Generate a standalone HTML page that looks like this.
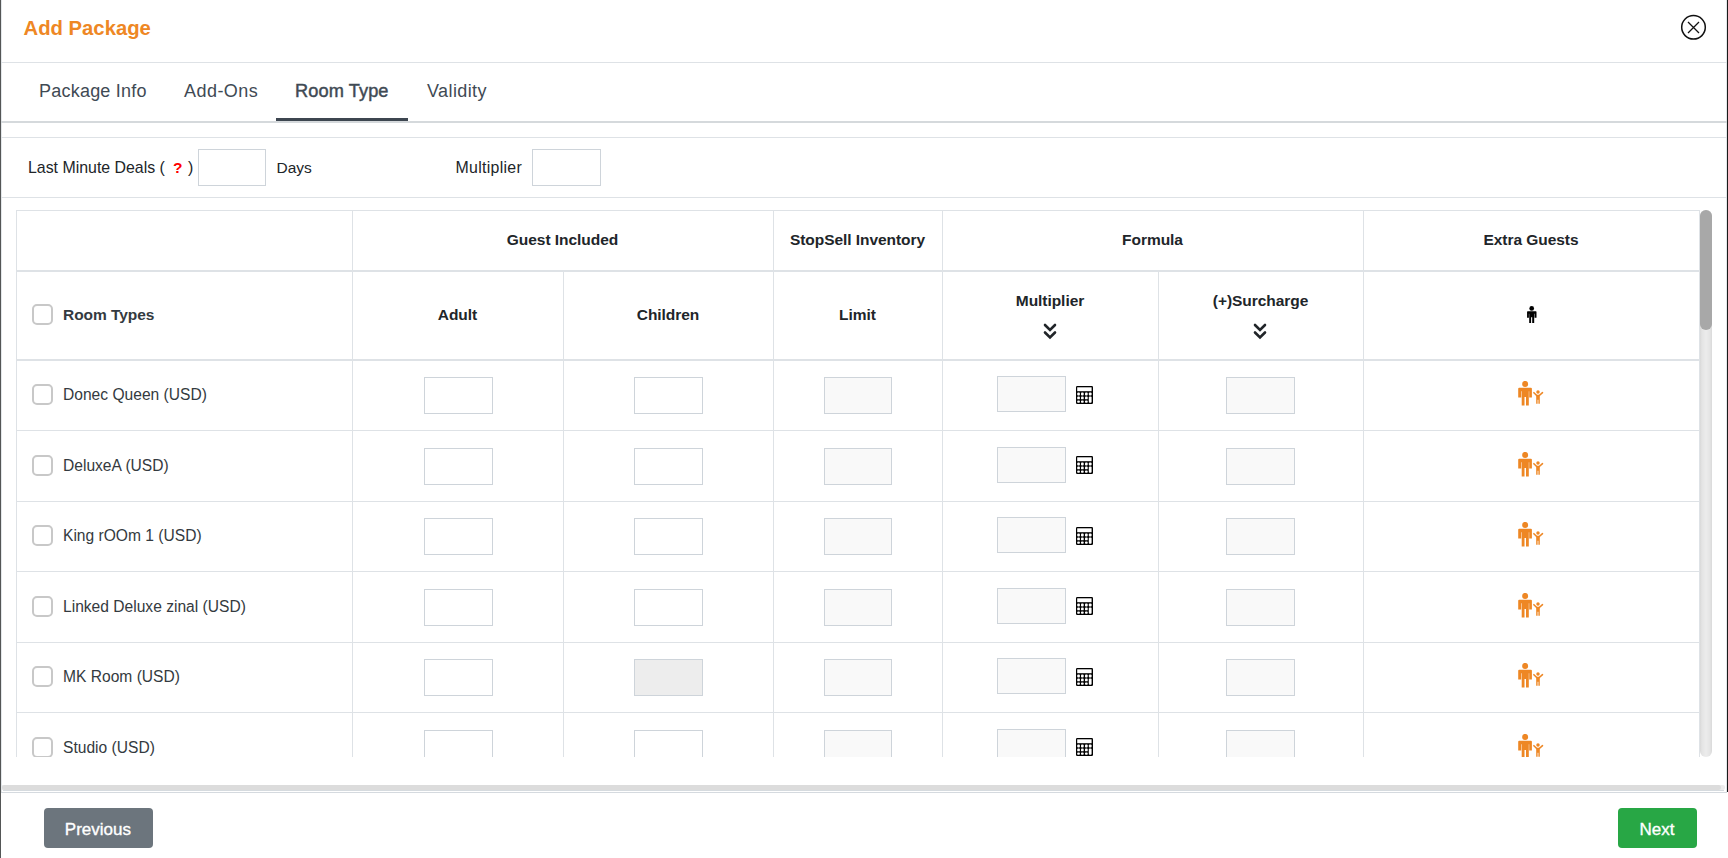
<!DOCTYPE html>
<html><head><meta charset="utf-8">
<style>
*{box-sizing:border-box;margin:0;padding:0}
html,body{width:1728px;height:858px;overflow:hidden;background:#fff;font-family:"Liberation Sans",sans-serif;color:#212529;position:relative}
.a{position:absolute}
.hl{position:absolute;height:1px;background:#dee2e6}
.vl{position:absolute;width:1px;background:#dee2e6}
.t{position:absolute;white-space:nowrap;line-height:1}
.inp{position:absolute;border:1px solid #ced4da;background:#fff}
.dis{background:#f9f9f9}
.dis2{background:#ededed}
.th{font-weight:bold;font-size:15.5px;letter-spacing:-0.05px;color:#212529}
.cb{position:absolute;width:21px;height:21px;border:2px solid #c8c8c8;border-radius:5px;background:#fff}
.nm{font-size:15.6px;letter-spacing:0px;color:#343a40}
</style></head><body>
<div class="a" style="left:0;top:0;width:1px;height:858px;background:#545656"></div>
<div class="a" style="left:1px;top:0;width:1px;height:793px;background:#e3e7ea"></div>
<div class="a" style="left:1726px;top:0;width:1px;height:792px;background:#e3e7ea"></div>
<div class="a" style="left:1727px;top:0;width:1px;height:792px;background:#1a1a1a"></div>
<div class="t" style="left:23.5px;top:18.2px;font-size:20.3px;font-weight:bold;color:#ee8724">Add Package</div>
<svg class="a" style="left:1680px;top:14px" width="27" height="27" viewBox="0 0 27 27">
<circle cx="13.5" cy="13.3" r="11.8" fill="none" stroke="#111" stroke-width="1.5"/>
<path d="M8 8 L19 19 M19 8 L8 19" stroke="#111" stroke-width="1.3"/></svg>
<div class="hl" style="left:1px;top:62px;width:1726px"></div>
<div class="t" style="left:39px;top:82px;font-size:18px;letter-spacing:0.22px;color:#3f4a54">Package Info</div>
<div class="t" style="left:184px;top:82px;font-size:18px;letter-spacing:0.45px;color:#3f4a54">Add-Ons</div>
<div class="t" style="left:295px;top:82px;font-size:18.2px;-webkit-text-stroke:0.45px #3f4a54;color:#3f4a54;letter-spacing:0.1px">Room Type</div>
<div class="t" style="left:427px;top:82px;font-size:18px;letter-spacing:0.4px;color:#3f4a54">Validity</div>
<div class="a" style="left:276px;top:118px;width:132px;height:3px;background:#3d4650"></div>
<div class="a" style="left:1px;top:121px;width:1726px;height:2px;background:#d5d9dc"></div>
<div class="hl" style="left:1px;top:137px;width:1726px"></div>
<div class="t" style="left:28px;top:160px;font-size:15.9px">Last Minute Deals (</div>
<div class="t" style="left:173px;top:160px;font-size:15.5px;font-weight:bold;color:#f00">?</div>
<div class="t" style="left:188px;top:160px;font-size:15.9px">)</div>
<div class="inp" style="left:198px;top:149px;width:68px;height:37px"></div>
<div class="t" style="left:276.5px;top:159.5px;font-size:15.5px">Days</div>
<div class="t" style="left:455.5px;top:160px;font-size:15.9px;letter-spacing:0.3px">Multiplier</div>
<div class="inp" style="left:532px;top:149px;width:69px;height:37px"></div>
<div class="hl" style="left:1px;top:197px;width:1726px"></div>
<div class="a" style="left:0;top:198px;width:1728px;height:559px;overflow:hidden">
<div class="hl" style="left:16px;top:12px;width:1684px"></div>
<div class="vl" style="left:16px;top:12px;height:600px"></div>
<div class="vl" style="left:1699px;top:12px;height:600px"></div>
<div class="a" style="left:16px;top:72px;width:1684px;height:2px;background:#dee2e6"></div>
<div class="a" style="left:16px;top:161px;width:1684px;height:2px;background:#dee2e6"></div>
<div class="vl" style="left:352px;top:12px;height:600px"></div>
<div class="vl" style="left:773px;top:12px;height:600px"></div>
<div class="vl" style="left:942px;top:12px;height:600px"></div>
<div class="vl" style="left:1363px;top:12px;height:600px"></div>
<div class="vl" style="left:563px;top:74px;height:600px"></div>
<div class="vl" style="left:1158px;top:74px;height:600px"></div>
<div class="hl" style="left:16px;top:232px;width:1684px"></div>
<div class="hl" style="left:16px;top:303px;width:1684px"></div>
<div class="hl" style="left:16px;top:373px;width:1684px"></div>
<div class="hl" style="left:16px;top:444px;width:1684px"></div>
<div class="hl" style="left:16px;top:514px;width:1684px"></div>
<div class="t th" style="left:362.5px;width:400px;text-align:center;top:33.5px;">Guest Included</div>
<div class="t th" style="left:657.5px;width:400px;text-align:center;top:33.5px;">StopSell Inventory</div>
<div class="t th" style="left:952.5px;width:400px;text-align:center;top:33.5px;">Formula</div>
<div class="t th" style="left:1331.0px;width:400px;text-align:center;top:33.5px;">Extra Guests</div>
<div class="t th" style="left:257.5px;width:400px;text-align:center;top:109px;">Adult</div>
<div class="t th" style="left:468.0px;width:400px;text-align:center;top:109px;">Children</div>
<div class="t th" style="left:657.5px;width:400px;text-align:center;top:109px;">Limit</div>
<div class="t th" style="left:850.0px;width:400px;text-align:center;top:95px;">Multiplier</div>
<div class="t th" style="left:1060.5px;width:400px;text-align:center;top:95px;">(+)Surcharge</div>
<div class="cb" style="left:32px;top:106px"></div>
<div class="t th" style="left:63px;top:109px;color:#343a40">Room Types</div>
<svg class="a" style="left:1043.4px;top:124.5px" width="14" height="17" viewBox="0 0 14 17"><path d="M2 2 L7 7 L12 2 M2 9.5 L7 14.5 L12 9.5" fill="none" stroke="#212529" stroke-width="2.6" stroke-linecap="round" stroke-linejoin="miter"/></svg>
<svg class="a" style="left:1253.4px;top:124.5px" width="14" height="17" viewBox="0 0 14 17"><path d="M2 2 L7 7 L12 2 M2 9.5 L7 14.5 L12 9.5" fill="none" stroke="#212529" stroke-width="2.6" stroke-linecap="round" stroke-linejoin="miter"/></svg>
<svg class="a" style="left:1526px;top:107.69999999999999px" width="12" height="18" viewBox="0 0 12 18"><circle cx="5.7" cy="2.4" r="2.35" fill="#000"/><path d="M1.7 5.3 H9.9 Q10.5 5.3 10.5 5.9 V11.8 H8.6 V7.8 H8.2 V17.1 H6.2 V11.2 H5.1 V17.1 H3.2 V7.8 H2.9 V11.8 H1.06 V5.9 Q1.06 5.3 1.7 5.3 Z" fill="#000"/></svg>
<div class="cb" style="left:32px;top:186.3px"></div>
<div class="t nm" style="left:63px;top:189.2px">Donec Queen (USD)</div>
<div class="inp" style="left:424px;top:179.0px;width:69px;height:37px"></div>
<div class="inp " style="left:634px;top:179.0px;width:69px;height:37px"></div>
<div class="inp dis" style="left:824px;top:179.0px;width:68px;height:37px"></div>
<div class="inp dis" style="left:997px;top:178.0px;width:69px;height:36px"></div>
<svg class="a" style="left:1076px;top:187.60000000000002px" width="17" height="18" viewBox="0 0 17 18"><rect x="0" y="0" width="17" height="18" rx="1.2" fill="#000"/>
<g fill="#fff"><rect x="1.2" y="1.3" width="14.4" height="3.9"/>
<rect x="1.2" y="6.5" width="2.7" height="3" rx="0.9"/><rect x="5.0" y="6.5" width="2.7" height="3" rx="0.9"/><rect x="9.0" y="6.5" width="2.7" height="3" rx="0.9"/><rect x="12.8" y="6.5" width="2.8" height="3" rx="0.9"/>
<rect x="1.2" y="10.5" width="2.7" height="2.8" rx="0.9"/><rect x="5.0" y="10.5" width="2.7" height="2.8" rx="0.9"/><rect x="9.0" y="10.5" width="2.7" height="2.8" rx="0.9"/>
<rect x="1.2" y="14.4" width="2.7" height="2.3" rx="0.8"/><rect x="5.0" y="14.4" width="2.7" height="2.3" rx="0.8"/><rect x="9.0" y="14.4" width="2.7" height="2.3" rx="0.8"/>
<rect x="12.8" y="10.5" width="2.8" height="6.2" rx="0.9"/></g></svg>
<div class="inp dis" style="left:1226px;top:179.0px;width:69px;height:37px"></div>
<svg class="a" style="left:1517px;top:183.0px" width="27" height="25" viewBox="0 0 27 25"><g fill="#ee8724">
<circle cx="8.15" cy="2.9" r="3"/><path d="M2.2 6.8 H13.9 Q14.9 6.8 14.9 7.8 V16.4 H12.2 V10.2 H11.8 V24.5 H9.0 V16 H7.5 V24.5 H4.7 V10.2 H4.2 V16.4 H1.2 V7.8 Q1.2 6.8 2.2 6.8 Z"/>
<circle cx="21" cy="11.1" r="1.75"/><path d="M19.2 13.8 H22.8 V22.7 H21.4 V18.7 H20.6 V22.7 H19.2 Z"/></g>
<path d="M16.9 11.7 L19.7 14.5 M25.5 11.7 L22.3 14.5" stroke="#ee8724" stroke-width="1.6" stroke-linecap="round"/></svg>
<div class="cb" style="left:32px;top:256.8px"></div>
<div class="t nm" style="left:63px;top:259.7px">DeluxeA (USD)</div>
<div class="inp" style="left:424px;top:249.5px;width:69px;height:37px"></div>
<div class="inp " style="left:634px;top:249.5px;width:69px;height:37px"></div>
<div class="inp dis" style="left:824px;top:249.5px;width:68px;height:37px"></div>
<div class="inp dis" style="left:997px;top:248.5px;width:69px;height:36px"></div>
<svg class="a" style="left:1076px;top:258.1px" width="17" height="18" viewBox="0 0 17 18"><rect x="0" y="0" width="17" height="18" rx="1.2" fill="#000"/>
<g fill="#fff"><rect x="1.2" y="1.3" width="14.4" height="3.9"/>
<rect x="1.2" y="6.5" width="2.7" height="3" rx="0.9"/><rect x="5.0" y="6.5" width="2.7" height="3" rx="0.9"/><rect x="9.0" y="6.5" width="2.7" height="3" rx="0.9"/><rect x="12.8" y="6.5" width="2.8" height="3" rx="0.9"/>
<rect x="1.2" y="10.5" width="2.7" height="2.8" rx="0.9"/><rect x="5.0" y="10.5" width="2.7" height="2.8" rx="0.9"/><rect x="9.0" y="10.5" width="2.7" height="2.8" rx="0.9"/>
<rect x="1.2" y="14.4" width="2.7" height="2.3" rx="0.8"/><rect x="5.0" y="14.4" width="2.7" height="2.3" rx="0.8"/><rect x="9.0" y="14.4" width="2.7" height="2.3" rx="0.8"/>
<rect x="12.8" y="10.5" width="2.8" height="6.2" rx="0.9"/></g></svg>
<div class="inp dis" style="left:1226px;top:249.5px;width:69px;height:37px"></div>
<svg class="a" style="left:1517px;top:253.5px" width="27" height="25" viewBox="0 0 27 25"><g fill="#ee8724">
<circle cx="8.15" cy="2.9" r="3"/><path d="M2.2 6.8 H13.9 Q14.9 6.8 14.9 7.8 V16.4 H12.2 V10.2 H11.8 V24.5 H9.0 V16 H7.5 V24.5 H4.7 V10.2 H4.2 V16.4 H1.2 V7.8 Q1.2 6.8 2.2 6.8 Z"/>
<circle cx="21" cy="11.1" r="1.75"/><path d="M19.2 13.8 H22.8 V22.7 H21.4 V18.7 H20.6 V22.7 H19.2 Z"/></g>
<path d="M16.9 11.7 L19.7 14.5 M25.5 11.7 L22.3 14.5" stroke="#ee8724" stroke-width="1.6" stroke-linecap="round"/></svg>
<div class="cb" style="left:32px;top:327.29999999999995px"></div>
<div class="t nm" style="left:63px;top:330.20000000000005px">King rOOm 1 (USD)</div>
<div class="inp" style="left:424px;top:320.0px;width:69px;height:37px"></div>
<div class="inp " style="left:634px;top:320.0px;width:69px;height:37px"></div>
<div class="inp dis" style="left:824px;top:320.0px;width:68px;height:37px"></div>
<div class="inp dis" style="left:997px;top:319.0px;width:69px;height:36px"></div>
<svg class="a" style="left:1076px;top:328.6px" width="17" height="18" viewBox="0 0 17 18"><rect x="0" y="0" width="17" height="18" rx="1.2" fill="#000"/>
<g fill="#fff"><rect x="1.2" y="1.3" width="14.4" height="3.9"/>
<rect x="1.2" y="6.5" width="2.7" height="3" rx="0.9"/><rect x="5.0" y="6.5" width="2.7" height="3" rx="0.9"/><rect x="9.0" y="6.5" width="2.7" height="3" rx="0.9"/><rect x="12.8" y="6.5" width="2.8" height="3" rx="0.9"/>
<rect x="1.2" y="10.5" width="2.7" height="2.8" rx="0.9"/><rect x="5.0" y="10.5" width="2.7" height="2.8" rx="0.9"/><rect x="9.0" y="10.5" width="2.7" height="2.8" rx="0.9"/>
<rect x="1.2" y="14.4" width="2.7" height="2.3" rx="0.8"/><rect x="5.0" y="14.4" width="2.7" height="2.3" rx="0.8"/><rect x="9.0" y="14.4" width="2.7" height="2.3" rx="0.8"/>
<rect x="12.8" y="10.5" width="2.8" height="6.2" rx="0.9"/></g></svg>
<div class="inp dis" style="left:1226px;top:320.0px;width:69px;height:37px"></div>
<svg class="a" style="left:1517px;top:324.0px" width="27" height="25" viewBox="0 0 27 25"><g fill="#ee8724">
<circle cx="8.15" cy="2.9" r="3"/><path d="M2.2 6.8 H13.9 Q14.9 6.8 14.9 7.8 V16.4 H12.2 V10.2 H11.8 V24.5 H9.0 V16 H7.5 V24.5 H4.7 V10.2 H4.2 V16.4 H1.2 V7.8 Q1.2 6.8 2.2 6.8 Z"/>
<circle cx="21" cy="11.1" r="1.75"/><path d="M19.2 13.8 H22.8 V22.7 H21.4 V18.7 H20.6 V22.7 H19.2 Z"/></g>
<path d="M16.9 11.7 L19.7 14.5 M25.5 11.7 L22.3 14.5" stroke="#ee8724" stroke-width="1.6" stroke-linecap="round"/></svg>
<div class="cb" style="left:32px;top:397.79999999999995px"></div>
<div class="t nm" style="left:63px;top:400.70000000000005px">Linked Deluxe zinal (USD)</div>
<div class="inp" style="left:424px;top:390.5px;width:69px;height:37px"></div>
<div class="inp " style="left:634px;top:390.5px;width:69px;height:37px"></div>
<div class="inp dis" style="left:824px;top:390.5px;width:68px;height:37px"></div>
<div class="inp dis" style="left:997px;top:389.5px;width:69px;height:36px"></div>
<svg class="a" style="left:1076px;top:399.1px" width="17" height="18" viewBox="0 0 17 18"><rect x="0" y="0" width="17" height="18" rx="1.2" fill="#000"/>
<g fill="#fff"><rect x="1.2" y="1.3" width="14.4" height="3.9"/>
<rect x="1.2" y="6.5" width="2.7" height="3" rx="0.9"/><rect x="5.0" y="6.5" width="2.7" height="3" rx="0.9"/><rect x="9.0" y="6.5" width="2.7" height="3" rx="0.9"/><rect x="12.8" y="6.5" width="2.8" height="3" rx="0.9"/>
<rect x="1.2" y="10.5" width="2.7" height="2.8" rx="0.9"/><rect x="5.0" y="10.5" width="2.7" height="2.8" rx="0.9"/><rect x="9.0" y="10.5" width="2.7" height="2.8" rx="0.9"/>
<rect x="1.2" y="14.4" width="2.7" height="2.3" rx="0.8"/><rect x="5.0" y="14.4" width="2.7" height="2.3" rx="0.8"/><rect x="9.0" y="14.4" width="2.7" height="2.3" rx="0.8"/>
<rect x="12.8" y="10.5" width="2.8" height="6.2" rx="0.9"/></g></svg>
<div class="inp dis" style="left:1226px;top:390.5px;width:69px;height:37px"></div>
<svg class="a" style="left:1517px;top:394.5px" width="27" height="25" viewBox="0 0 27 25"><g fill="#ee8724">
<circle cx="8.15" cy="2.9" r="3"/><path d="M2.2 6.8 H13.9 Q14.9 6.8 14.9 7.8 V16.4 H12.2 V10.2 H11.8 V24.5 H9.0 V16 H7.5 V24.5 H4.7 V10.2 H4.2 V16.4 H1.2 V7.8 Q1.2 6.8 2.2 6.8 Z"/>
<circle cx="21" cy="11.1" r="1.75"/><path d="M19.2 13.8 H22.8 V22.7 H21.4 V18.7 H20.6 V22.7 H19.2 Z"/></g>
<path d="M16.9 11.7 L19.7 14.5 M25.5 11.7 L22.3 14.5" stroke="#ee8724" stroke-width="1.6" stroke-linecap="round"/></svg>
<div class="cb" style="left:32px;top:468.29999999999995px"></div>
<div class="t nm" style="left:63px;top:471.20000000000005px">MK Room (USD)</div>
<div class="inp" style="left:424px;top:461.0px;width:69px;height:37px"></div>
<div class="inp dis2" style="left:634px;top:461.0px;width:69px;height:37px"></div>
<div class="inp dis" style="left:824px;top:461.0px;width:68px;height:37px"></div>
<div class="inp dis" style="left:997px;top:460.0px;width:69px;height:36px"></div>
<svg class="a" style="left:1076px;top:469.6px" width="17" height="18" viewBox="0 0 17 18"><rect x="0" y="0" width="17" height="18" rx="1.2" fill="#000"/>
<g fill="#fff"><rect x="1.2" y="1.3" width="14.4" height="3.9"/>
<rect x="1.2" y="6.5" width="2.7" height="3" rx="0.9"/><rect x="5.0" y="6.5" width="2.7" height="3" rx="0.9"/><rect x="9.0" y="6.5" width="2.7" height="3" rx="0.9"/><rect x="12.8" y="6.5" width="2.8" height="3" rx="0.9"/>
<rect x="1.2" y="10.5" width="2.7" height="2.8" rx="0.9"/><rect x="5.0" y="10.5" width="2.7" height="2.8" rx="0.9"/><rect x="9.0" y="10.5" width="2.7" height="2.8" rx="0.9"/>
<rect x="1.2" y="14.4" width="2.7" height="2.3" rx="0.8"/><rect x="5.0" y="14.4" width="2.7" height="2.3" rx="0.8"/><rect x="9.0" y="14.4" width="2.7" height="2.3" rx="0.8"/>
<rect x="12.8" y="10.5" width="2.8" height="6.2" rx="0.9"/></g></svg>
<div class="inp dis" style="left:1226px;top:461.0px;width:69px;height:37px"></div>
<svg class="a" style="left:1517px;top:465.0px" width="27" height="25" viewBox="0 0 27 25"><g fill="#ee8724">
<circle cx="8.15" cy="2.9" r="3"/><path d="M2.2 6.8 H13.9 Q14.9 6.8 14.9 7.8 V16.4 H12.2 V10.2 H11.8 V24.5 H9.0 V16 H7.5 V24.5 H4.7 V10.2 H4.2 V16.4 H1.2 V7.8 Q1.2 6.8 2.2 6.8 Z"/>
<circle cx="21" cy="11.1" r="1.75"/><path d="M19.2 13.8 H22.8 V22.7 H21.4 V18.7 H20.6 V22.7 H19.2 Z"/></g>
<path d="M16.9 11.7 L19.7 14.5 M25.5 11.7 L22.3 14.5" stroke="#ee8724" stroke-width="1.6" stroke-linecap="round"/></svg>
<div class="cb" style="left:32px;top:538.8px"></div>
<div class="t nm" style="left:63px;top:541.7px">Studio (USD)</div>
<div class="inp" style="left:424px;top:531.5px;width:69px;height:37px"></div>
<div class="inp " style="left:634px;top:531.5px;width:69px;height:37px"></div>
<div class="inp dis" style="left:824px;top:531.5px;width:68px;height:37px"></div>
<div class="inp dis" style="left:997px;top:530.5px;width:69px;height:36px"></div>
<svg class="a" style="left:1076px;top:540.1px" width="17" height="18" viewBox="0 0 17 18"><rect x="0" y="0" width="17" height="18" rx="1.2" fill="#000"/>
<g fill="#fff"><rect x="1.2" y="1.3" width="14.4" height="3.9"/>
<rect x="1.2" y="6.5" width="2.7" height="3" rx="0.9"/><rect x="5.0" y="6.5" width="2.7" height="3" rx="0.9"/><rect x="9.0" y="6.5" width="2.7" height="3" rx="0.9"/><rect x="12.8" y="6.5" width="2.8" height="3" rx="0.9"/>
<rect x="1.2" y="10.5" width="2.7" height="2.8" rx="0.9"/><rect x="5.0" y="10.5" width="2.7" height="2.8" rx="0.9"/><rect x="9.0" y="10.5" width="2.7" height="2.8" rx="0.9"/>
<rect x="1.2" y="14.4" width="2.7" height="2.3" rx="0.8"/><rect x="5.0" y="14.4" width="2.7" height="2.3" rx="0.8"/><rect x="9.0" y="14.4" width="2.7" height="2.3" rx="0.8"/>
<rect x="12.8" y="10.5" width="2.8" height="6.2" rx="0.9"/></g></svg>
<div class="inp dis" style="left:1226px;top:531.5px;width:69px;height:37px"></div>
<svg class="a" style="left:1517px;top:535.5px" width="27" height="25" viewBox="0 0 27 25"><g fill="#ee8724">
<circle cx="8.15" cy="2.9" r="3"/><path d="M2.2 6.8 H13.9 Q14.9 6.8 14.9 7.8 V16.4 H12.2 V10.2 H11.8 V24.5 H9.0 V16 H7.5 V24.5 H4.7 V10.2 H4.2 V16.4 H1.2 V7.8 Q1.2 6.8 2.2 6.8 Z"/>
<circle cx="21" cy="11.1" r="1.75"/><path d="M19.2 13.8 H22.8 V22.7 H21.4 V18.7 H20.6 V22.7 H19.2 Z"/></g>
<path d="M16.9 11.7 L19.7 14.5 M25.5 11.7 L22.3 14.5" stroke="#ee8724" stroke-width="1.6" stroke-linecap="round"/></svg>
<div class="a" style="left:1700px;top:12px;width:12px;height:547px;background:linear-gradient(to right,#d9d9d9 0,#e4e4e4 2px,#ececec 50%,#e4e4e4 10px,#d9d9d9 12px);border-radius:6px"></div>
<div class="a" style="left:1700px;top:12px;width:12px;height:120px;background:#a8a8a8;border-radius:6px"></div>
</div>
<div class="a" style="left:2px;top:785px;width:1723px;height:5px;background:#ececec;border-radius:0 2px 2px 0"></div>
<div class="a" style="left:2px;top:785px;width:1719px;height:5px;background:#dcdcdc;border-radius:2.5px"></div>
<div class="hl" style="left:3px;top:790px;width:1721px;background:#d6dbdf"></div>
<div class="hl" style="left:1px;top:792px;width:1726px;background:#d5dadf"></div>
<div class="a" style="left:44px;top:808px;width:109px;height:40px;background:#6c757d;border-radius:4px"></div>
<div class="t" style="left:64.8px;top:821.2px;font-size:17px;-webkit-text-stroke:0.35px #fff;color:#fff">Previous</div>
<div class="a" style="left:1618px;top:808px;width:79px;height:40px;background:#28a745;border-radius:4px"></div>
<div class="t" style="left:1639.5px;top:821px;font-size:17px;-webkit-text-stroke:0.35px #fff;color:#fff">Next</div>
</body></html>
